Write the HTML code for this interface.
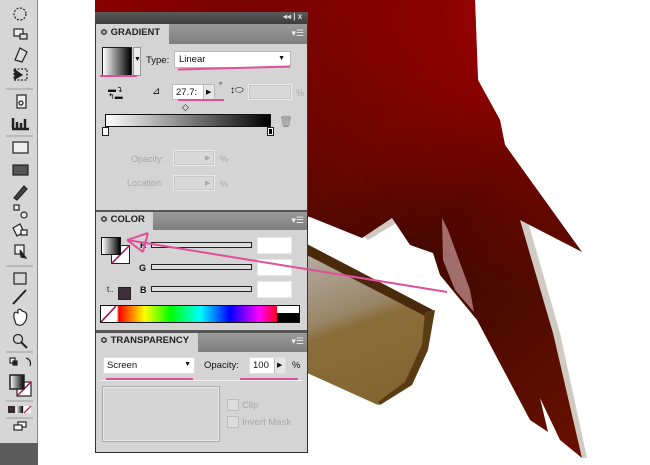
<!DOCTYPE html>
<html><head><style>
*{margin:0;padding:0;box-sizing:border-box}
body{width:650px;height:465px;position:relative;overflow:hidden;background:#fff;font-family:"Liberation Sans",Tahoma,sans-serif;font-size:9px;color:#111}
.a{position:absolute}
.hdr{position:absolute;left:96px;width:211px;background:linear-gradient(#9a9a9a,#7e7e7e)}
.tab{position:absolute;left:0;top:0;bottom:0;background:#d4d4d4;font-weight:bold;font-size:9.5px;padding:3px 0 0 4px;color:#222}
.menu{position:absolute;right:3px;top:4px;font-size:9px;color:#eee}
.wb{position:absolute;background:#fff;border:1px solid #b8b8b8}
.dis{position:absolute;background:#d8d8d8;border:1px solid #e8e8e8;box-shadow:inset 0 0 0 1px #c8c8c8}
.lbl{position:absolute;color:#a8a8a8;font-size:9px}
.slider{position:absolute;left:151px;width:101px;height:6px;border:1px solid #222;background:#ddd}
.pink{position:absolute;height:2px;background:#e0509a}
</style></head><body>
<svg class="a" style="left:0;top:0" width="650" height="465">
<defs>
<linearGradient id="rg" x1="0" y1="0" x2="1" y2="1">
<stop offset="0" stop-color="#8a0000"/><stop offset="0.45" stop-color="#5a0800"/><stop offset="0.6" stop-color="#3a0800"/><stop offset="1" stop-color="#6a1000"/></linearGradient>
<radialGradient id="rg2" cx="0.9" cy="0.05" r="0.6"><stop offset="0" stop-color="#a00000"/><stop offset="1" stop-color="#a00000" stop-opacity="0"/></radialGradient>
<linearGradient id="bg" x1="0" y1="0" x2="0.3" y2="1"><stop offset="0" stop-color="#b8aca4"/><stop offset="0.45" stop-color="#9a8668"/><stop offset="0.55" stop-color="#8a6e3a"/><stop offset="1" stop-color="#846632"/></linearGradient>
</defs>
<path d="M305,252 L433,313 L428,345 L400,392 L378,405 L305,372 Z" fill="url(#bg)"/>
<path d="M305,243 L433,310 L425,316 L305,254 Z" fill="#4a2a0c"/>
<path d="M425,312 L435,310 L428,350 L412,385 L380,405 L378,402 L405,382 L422,345 Z" fill="#5a3c14"/>
<path d="M362,235 L392,218 L398,222 L368,240 Z" fill="#cfc8c0"/>
<path d="M520,220 L528,222 L560,333 L587,458 L582,458 L553,333 Z" fill="#cfcac2"/>
<path d="M95,0 L475,0 L478,80 L500,120 L505,145 L582,252 L520,220 L553,333 L582,458 L560,440 L540,398 L548,432 L530,420 L477,320 L440,275 L433,253 L410,245 L392,218 L362,238 L310,217 L300,215 L95,215 Z" fill="url(#rg)"/>
<path d="M95,0 L475,0 L478,80 L500,120 L505,145 L582,252 L520,220 L553,333 L582,458 L560,440 L540,398 L548,432 L530,420 L477,320 L440,275 L433,253 L410,245 L392,218 L362,238 L310,217 L300,215 L95,215 Z" fill="url(#rg2)"/>
<path d="M442,218 L448,230 L470,290 L474,312 L455,290 L443,260 Z" fill="#c89898" opacity="0.7"/>
</svg>

<div class="a" style="left:0;top:0;width:38px;height:465px;background:#d6d6d6;border-right:1px solid #888"></div>
<div class="a" style="left:0;top:443px;width:38px;height:22px;background:#5c5c5c"></div>
<svg class="a" style="left:0;top:0" width="38" height="443" fill="none" stroke="#222" stroke-width="1.2">
<circle cx="20" cy="14" r="6" stroke-dasharray="2 1.5"/>
<rect x="14" y="29" width="9" height="7" fill="#eee"/><rect x="20" y="34" width="7" height="5" fill="#ddd"/>
<path d="M15,60 L20,48 L27,52 L22,62 Z" fill="#ddd"/>
<rect x="14" y="69" width="13" height="11" stroke-dasharray="2 1.5"/><path d="M15,70 L22,75 L15,79Z" fill="#222"/>
<line x1="6" y1="89" x2="33" y2="89" stroke="#aaa"/>
<rect x="17" y="95" width="9" height="13" fill="#eee"/><circle cx="21" cy="103" r="2"/>
<path d="M13,128 L13,118 M17,128 L17,122 M21,128 L21,123 M25,128 L25,119 M12,129 L29,129" stroke-width="2.5"/>
<line x1="6" y1="136" x2="33" y2="136" stroke="#aaa"/>
<rect x="13" y="142" width="15" height="11" fill="#eee"/>
<rect x="13" y="165" width="15" height="10" fill="#555"/>
<path d="M14,198 L24,186 L27,189 L17,200Z" fill="#444"/>
<rect x="14" y="205" width="5" height="5" fill="#eee"/><circle cx="24" cy="215" r="3" fill="#eee"/>
<path d="M13,228 L20,224 L24,232 L17,236Z" fill="#eee"/><rect x="21" y="230" width="6" height="5" fill="#eee"/>
<rect x="15" y="245" width="9" height="9" fill="#eee"/><path d="M20,250 L26,258 L21,257Z" fill="#222"/>
<line x1="6" y1="266" x2="33" y2="266" stroke="#aaa"/>
<rect x="14" y="273" width="12" height="11"/>
<path d="M13,304 L26,290" stroke-width="2"/>
<path d="M14,318 Q13,310 18,313 L18,310 Q20,308 22,311 L25,312 Q28,314 26,320 Q22,328 16,324Z" fill="#fff"/>
<circle cx="18" cy="339" r="4.5"/><path d="M21,342 L27,348" stroke-width="2"/>
<line x1="6" y1="352" x2="33" y2="352" stroke="#aaa"/>
<rect x="10" y="358" width="5" height="5" fill="#fff"/><rect x="13" y="361" width="4" height="4" fill="#222"/>
<path d="M26,358 Q32,360 30,366" />
<rect x="17" y="382" width="14" height="14" fill="#fff"/><path d="M18,395 L31,382" stroke="#b01040" stroke-width="1.5"/>
<defs><linearGradient id="tg"><stop offset="0" stop-color="#fff"/><stop offset="1" stop-color="#000"/></linearGradient></defs>
<rect x="10" y="375" width="14" height="14" fill="url(#tg)" stroke-width="1.5"/>
<line x1="6" y1="401" x2="33" y2="401" stroke="#aaa"/>
<rect x="8" y="406" width="7" height="7" fill="#3a2a30" stroke="none"/><rect x="16" y="406" width="7" height="7" fill="url(#tg)" stroke="none"/><rect x="24" y="406" width="7" height="7" fill="#fff" stroke="none"/><path d="M24,413 L31,406" stroke="#b01040"/>
<line x1="6" y1="418" x2="33" y2="418" stroke="#aaa"/>
<rect x="18" y="422" width="8" height="5" fill="#fff"/><rect x="14" y="425" width="8" height="5" fill="#fff"/>
</svg>

<div class="a" style="left:95px;top:12px;width:213px;height:441px;background:#d4d4d4;border:1px solid #333"></div>
<div class="a" style="left:95px;top:12px;width:213px;height:12px;background:linear-gradient(#5a5a5a,#3c3c3c)"></div>
<div class="a" style="left:283px;top:12px;color:#ddd;font-size:8px;font-weight:bold">◂◂ | x</div>

<div class="hdr" style="top:24px;height:20px"><div class="tab" style="width:73px">≎ GRADIENT</div><div class="menu">▾☰</div></div>
<div class="a" style="left:102px;top:47px;width:30px;height:29px;border:1px solid #222;background:linear-gradient(90deg,#fff,#000)"></div>
<div class="a" style="left:133px;top:47px;width:8px;height:29px;background:#eee;border:1px solid #999;font-size:7px;padding-top:8px">▼</div>
<div class="a" style="left:146px;top:55px;font-size:9.5px">Type:</div>
<div class="wb" style="left:174px;top:51px;width:117px;height:17px;padding:2px 4px;font-size:9.5px">Linear<span style="position:absolute;right:5px;top:3px;font-size:7px">▼</span></div>
<div class="pink" style="left:100px;top:75px;width:37px"></div>
<div class="pink" style="left:178px;top:67px;width:112px;transform:rotate(-1.5deg)"></div>
<div class="a" style="left:108px;top:86px;font-size:8px;line-height:7px">▬↴<br>↰▬</div>
<div class="a" style="left:152px;top:86px;font-size:10px">⊿</div>
<div class="wb" style="left:172px;top:84px;width:43px;height:16px;padding:2px 3px;font-size:9.5px">27.7:<span style="position:absolute;right:0;top:0;width:11px;height:14px;background:#e6e6e6;border-left:1px solid #bbb;font-size:7px;padding:3px 2px">▶</span></div>
<div class="a" style="left:219px;top:81px;font-size:8px">°</div>
<div class="a" style="left:230px;top:85px;font-size:10px">↕⬭</div>
<div class="dis" style="left:248px;top:84px;width:44px;height:16px"></div>
<div class="lbl" style="left:296px;top:88px">%</div>
<div class="pink" style="left:178px;top:99px;width:46px"></div>
<div class="a" style="left:182px;top:102px;font-size:9px">◇</div>
<div class="pink" style="left:181px;top:114px;width:14px"></div>
<div class="a" style="left:105px;top:114px;width:166px;height:13px;border:1px solid #111;background:linear-gradient(90deg,#fff,#000)"></div>
<div class="a" style="left:102px;top:127px;width:7px;height:9px;border:1px solid #222;background:#fff"></div>
<div class="a" style="left:267px;top:127px;width:7px;height:9px;border:1px solid #222;background:#000;box-shadow:inset 0 0 0 1px #fff"></div>
<div class="a" style="left:279px;top:115px;color:#888;font-size:11px">🗑</div>
<div class="lbl" style="left:131px;top:154px">Opacity:</div>
<div class="dis" style="left:173px;top:150px;width:42px;height:16px"></div>
<div class="lbl" style="left:205px;top:154px;font-size:7px">▶</div>
<div class="lbl" style="left:220px;top:154px">%</div>
<div class="lbl" style="left:127px;top:178px">Location:</div>
<div class="dis" style="left:173px;top:175px;width:42px;height:16px"></div>
<div class="lbl" style="left:205px;top:179px;font-size:7px">▶</div>
<div class="lbl" style="left:220px;top:179px">%</div>
<div class="a" style="left:96px;top:210px;width:211px;height:2px;background:#555"></div>

<div class="hdr" style="top:212px;height:18px"><div class="tab" style="width:57px;padding-top:2px">≎ COLOR</div><div class="menu" style="top:3px">▾☰</div></div>
<div class="a" style="left:111px;top:245px;width:19px;height:19px;border:1px solid #222;background:#fff"></div>
<svg class="a" style="left:111px;top:245px" width="19" height="19"><line x1="0" y1="19" x2="19" y2="0" stroke="#a01040" stroke-width="1.5"/></svg>
<div class="a" style="left:101px;top:237px;width:20px;height:18px;border:1px solid #111;background:linear-gradient(90deg,#fff,#000)"></div>
<div class="a" style="left:140px;top:240px;font-weight:bold">R</div>
<div class="slider" style="top:242px"></div>
<div class="wb" style="left:257px;top:237px;width:35px;height:17px;border-color:#e8e8e8"></div>
<div class="a" style="left:139px;top:263px;font-weight:bold">G</div>
<div class="slider" style="top:264px"></div>
<div class="wb" style="left:257px;top:259px;width:35px;height:17px;border-color:#e8e8e8"></div>
<div class="a" style="left:107px;top:285px;font-size:8px">t..</div>
<div class="a" style="left:118px;top:287px;width:13px;height:13px;border:1px solid #222;background:#3e2e38"></div>
<div class="a" style="left:140px;top:285px;font-weight:bold">B</div>
<div class="slider" style="top:286px"></div>
<div class="wb" style="left:257px;top:281px;width:35px;height:17px;border-color:#e8e8e8"></div>
<div class="a" style="left:100px;top:305px;width:200px;height:18px;border:1px solid #111;background:linear-gradient(90deg,#fff 0,#fff 8%,#f00 9%,#ff0 22%,#0f0 35%,#0ff 50%,#00f 65%,#f0f 80%,#f00 90%,#000 100%)"></div>
<div class="a" style="left:101px;top:306px;width:15px;height:16px;background:#fff"></div>
<svg class="a" style="left:101px;top:306px" width="15" height="16"><line x1="0" y1="16" x2="15" y2="0" stroke="#a01040" stroke-width="1.5"/></svg>
<div class="a" style="left:277px;top:306px;width:22px;height:7px;background:#fff"></div>
<div class="a" style="left:277px;top:313px;width:22px;height:9px;background:#000"></div>
<div class="a" style="left:96px;top:330px;width:211px;height:3px;background:#555"></div>

<div class="hdr" style="top:333px;height:19px"><div class="tab" style="width:102px;padding-top:2px">≎ TRANSPARENCY</div><div class="menu" style="top:3px">▾☰</div></div>
<div class="wb" style="left:103px;top:357px;width:92px;height:17px;padding:2px 3px;font-size:9.5px;border-color:#ddd">Screen<span style="position:absolute;right:3px;top:3px;font-size:7px">▼</span></div>
<div class="a" style="left:204px;top:360px;font-size:9.5px">Opacity:</div>
<div class="wb" style="left:249px;top:357px;width:37px;height:17px;padding:2px 3px;font-size:9.5px;border-color:#ddd">100<span style="position:absolute;right:0;top:0;width:11px;height:15px;background:#e6e6e6;border-left:1px solid #bbb;font-size:7px;padding:3px 2px">▶</span></div>
<div class="a" style="left:292px;top:360px;font-size:9.5px">%</div>
<div class="a" style="left:100px;top:380px;width:202px;height:1px;background:#f2f2f2"></div>
<div class="pink" style="left:106px;top:378px;width:87px"></div>
<div class="pink" style="left:240px;top:378px;width:58px"></div>
<div class="a" style="left:102px;top:386px;width:118px;height:56px;border:1px solid #aaa;box-shadow:inset 0 0 0 1px #e8e8e8"></div>
<div class="a" style="left:227px;top:399px;width:12px;height:12px;border:1px solid #bbb;background:#ddd"></div>
<div class="lbl" style="left:242px;top:400px;font-size:9.5px">Clip</div>
<div class="a" style="left:227px;top:416px;width:12px;height:12px;border:1px solid #bbb;background:#ddd"></div>
<div class="lbl" style="left:242px;top:417px;font-size:9.5px">Invert Mask</div>

<svg class="a" style="left:0;top:0" width="650" height="465">
<line x1="127" y1="240" x2="447" y2="292" stroke="#e0509a" stroke-width="2"/>
<path d="M127,240 L148,233 M127,240 L143,252 M148,233 L143,252" stroke="#e0509a" stroke-width="2" fill="none"/>
</svg>
</body></html>
